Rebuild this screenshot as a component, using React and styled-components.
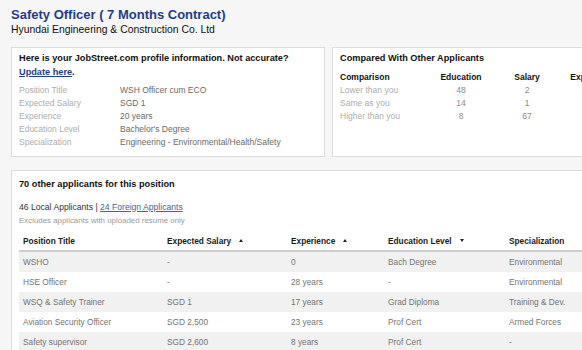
import { Fragment } from "react"
import styled, { createGlobalStyle } from "styled-components"

const GlobalStyle = createGlobalStyle`
  body {
    margin: 0;
    background: #f6f6f6;
    font-family: "Liberation Sans", Arial, sans-serif;
    overflow: hidden;
  }
`;

const Page = styled.div`
  width: 780px;
  padding: 7px 11px;
`;

const JobTitle = styled.h1`
  margin: 0;
  font-size: 13px;
  line-height: 16px;
  font-weight: bold;
  color: #1f3d8c;
`;

const Company = styled.div`
  font-size: 10.4px;
  line-height: 13px;
  color: #111;
`;

const TopRow = styled.div`
  display: flex;
  gap: 7px;
  margin-top: 11px;
`;

const Card = styled.div`
  background: #fff;
  border: 1px solid #dcdcdc;
  box-sizing: border-box;
  width: ${(p) => p.$width || "auto"};
  flex: ${(p) => (p.$width ? "none" : "1")};
  padding: ${(p) => p.$pad || "4px 7px 7px"};
`;

const CardHeading = styled.div`
  font-size: 9.2px;
  line-height: 13.5px;
  font-weight: bold;
  color: #111;
`;

const LinkText = styled.a`
  color: ${(p) => (p.$light ? "#4362aa" : "#1f3d8c")};
  text-decoration: underline;
`;

const InfoList = styled.div`
  display: grid;
  grid-template-columns: 101px 1fr;
  margin-top: 5px;
  font-size: 8.5px;
  line-height: 13px;
`;

const InfoLabel = styled.div`
  color: #adadad;
`;

const InfoValue = styled.div`
  color: #6a6a6a;
`;

const CompareGrid = styled.div`
  display: grid;
  grid-template-columns: 88px 66px 66px 66px;
  margin-top: 5px;
  font-size: 8.5px;
  line-height: 13px;
`;

const CompareHead = styled.div`
  font-weight: bold;
  color: #111;
  text-align: ${(p) => (p.$left ? "left" : "center")};
`;

const CompareCell = styled.div`
  color: ${(p) => (p.$left ? "#adadad" : "#8a8a8a")};
  text-align: ${(p) => (p.$left ? "left" : "center")};
`;

const ApplicantsCard = styled(Card)`
  margin-top: 13px;
  padding: 7px 7px 0;
`;

const CountLine = styled.div`
  margin-top: 9px;
  font-size: 8.6px;
  line-height: 13px;
  color: #333;
`;

const Note = styled.div`
  font-size: 7.9px;
  line-height: 13px;
  color: #999;
`;

const Table = styled.table`
  margin-top: 5px;
  border-collapse: collapse;
  table-layout: fixed;
  width: 640px;
  font-size: 8.3px;
`;

const Th = styled.th`
  text-align: left;
  font-weight: bold;
  color: #1a1a1a;
  height: 18px;
  padding: 0 4px;
  border-bottom: 2px solid #cfcfcf;
  white-space: nowrap;
`;

const Row = styled.tr`
  background: ${(p) => (p.$striped ? "#f1f1f1" : "#fff")};
`;

const Td = styled.td`
  height: 20px;
  padding: 0 4px;
  color: #747474;
  white-space: nowrap;
`;

const SortArrow = styled.span`
  display: inline-block;
  margin-left: 8px;
  width: 0;
  height: 0;
  border-left: 2.5px solid transparent;
  border-right: 2.5px solid transparent;
  ${(p) =>
    p.$down
      ? "border-top: 3px solid #222;"
      : "border-bottom: 3px solid #222;"}
  vertical-align: middle;
  position: relative;
  top: -1px;
`;

const profile = [
  ["Position Title", "WSH Officer cum ECO"],
  ["Expected Salary", "SGD 1"],
  ["Experience", "20 years"],
  ["Education Level", "Bachelor's Degree"],
  ["Specialization", "Engineering - Environmental/Health/Safety"],
];

const comparison = [
  ["Lower than you", "48", "2", ""],
  ["Same as you", "14", "1", ""],
  ["Higher than you", "8", "67", ""],
];

const applicants = [
  ["WSHO", "-", "0", "Bach Degree", "Environmental"],
  ["HSE Officer", "-", "28 years", "-", "Environmental"],
  ["WSQ & Safety Trainer", "SGD 1", "17 years", "Grad Diploma", "Training & Dev."],
  ["Aviation Security Officer", "SGD 2,500", "23 years", "Prof Cert", "Armed Forces"],
  ["Safety supervisor", "SGD 2,600", "8 years", "Prof Cert", "-"],
];

export default function App() {
  return (
    <>
      <GlobalStyle />
      <Page>
        <JobTitle>Safety Officer ( 7 Months Contract)</JobTitle>
        <Company>Hyundai Engineering &amp; Construction Co. Ltd</Company>

        <TopRow>
          <Card $width="314px">
            <CardHeading>
              Here is your JobStreet.com profile information. Not accurate?
              <br />
              <LinkText href="#">Update here</LinkText>.
            </CardHeading>
            <InfoList>
              {profile.map(([label, value]) => (
                <Fragment key={label}>
                  <InfoLabel>{label}</InfoLabel>
                  <InfoValue>{value}</InfoValue>
                </Fragment>
              ))}
            </InfoList>
          </Card>

          <Card $pad="4px 7px">
            <CardHeading>Compared With Other Applicants</CardHeading>
            <CompareGrid>
              <CompareHead $left>Comparison</CompareHead>
              <CompareHead>Education</CompareHead>
              <CompareHead>Salary</CompareHead>
              <CompareHead>Experience</CompareHead>
              {comparison.map((r) =>
                r.map((c, i) => (
                  <CompareCell key={r[0] + i} $left={i === 0}>
                    {c}
                  </CompareCell>
                ))
              )}
            </CompareGrid>
          </Card>
        </TopRow>

        <ApplicantsCard>
          <CardHeading>70 other applicants for this position</CardHeading>
          <CountLine>
            46 Local Applicants | <LinkText href="#" $light>24 Foreign Applicants</LinkText>
          </CountLine>
          <Note>Excludes applicants with uploaded resume only</Note>
          <Table>
            <colgroup>
              <col style={{ width: 144 }} />
              <col style={{ width: 124 }} />
              <col style={{ width: 97 }} />
              <col style={{ width: 121 }} />
              <col style={{ width: 154 }} />
            </colgroup>
            <thead>
              <tr>
                <Th>Position Title</Th>
                <Th>
                  Expected Salary<SortArrow />
                </Th>
                <Th>
                  Experience<SortArrow />
                </Th>
                <Th>
                  Education Level<SortArrow $down />
                </Th>
                <Th>Specialization</Th>
              </tr>
            </thead>
            <tbody>
              {applicants.map((r, i) => (
                <Row key={r[0]} $striped={i % 2 === 0}>
                  {r.map((c, j) => (
                    <Td key={j}>{c}</Td>
                  ))}
                </Row>
              ))}
            </tbody>
          </Table>
        </ApplicantsCard>
      </Page>
    </>
  );
}
